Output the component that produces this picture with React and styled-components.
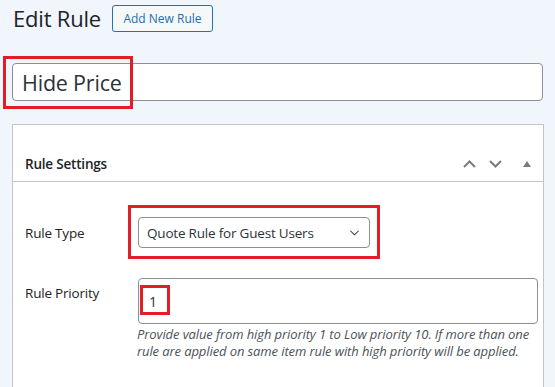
import React from 'react';
import styled, { createGlobalStyle } from 'styled-components';

const GlobalStyle = createGlobalStyle`
  html, body {
    margin: 0;
    padding: 0;
    background: #f0f6fc;
    font-family: "Open Sans", "Noto Sans", sans-serif;
    color: #1d2327;
    overflow: hidden;
  }
  * {
    box-sizing: border-box;
  }
`;

const Page = styled.div`
  padding: 5px 12px 0 12px;
  height: 387px;
  overflow: hidden;
`;

const HeaderBar = styled.div`
  display: flex;
  align-items: center;
  height: 27px;
`;

const Heading = styled.h1`
  margin: 0 0 0 1px;
  font-size: 22px;
  font-weight: 400;
  line-height: 27px;
  letter-spacing: -0.2px;
  color: #1d2327;
`;

const ActionButton = styled.button`
  display: flex;
  align-items: center;
  justify-content: center;
  width: 101px;
  height: 27px;
  margin-left: 11px;
  padding: 0;
  border: 1px solid #2271b1;
  border-radius: 3px;
  background: #f6f7f7;
  color: #2271b1;
  font-family: inherit;
  font-size: 12px;
  font-weight: 500;
`;

const Marked = styled.div`
  position: relative;
`;

const Highlight = styled.span`
  position: absolute;
  left: ${(p) => p.left}px;
  top: ${(p) => p.top}px;
  width: ${(p) => p.width}px;
  height: ${(p) => p.height}px;
  border: 3px solid #e31d25;
  pointer-events: none;
`;

const TitleInput = styled.div`
  display: flex;
  align-items: center;
  height: 38px;
  width: 531px;
  margin-top: 31px;
  padding: 0 9px;
  background: #fff;
  border: 1px solid #8c8f94;
  border-radius: 4px;
  font-size: 21.5px;
  letter-spacing: -0.2px;
  color: #2c3338;
`;

const Postbox = styled.section`
  margin-top: 23px;
  width: 532px;
  height: 270px;
  background: #fff;
  border: 1px solid #c3c4c7;
`;

const PostboxHeader = styled.div`
  display: flex;
  align-items: center;
  height: 57px;
  padding: 21px 0 0 12px;
  border-bottom: 1px solid #c3c4c7;
`;

const PostboxTitle = styled.h2`
  flex: 1;
  margin: 0;
  font-size: 13.5px;
  font-weight: 600;
  letter-spacing: -0.2px;
  color: #1d2327;
`;

const HandleButtons = styled.div`
  display: flex;
  align-items: center;
  padding-right: 12px;
`;

const Handle = styled.span`
  display: flex;
  align-items: center;
  justify-content: center;
  width: ${(p) => p.w}px;
  margin-left: ${(p) => p.gap}px;
  color: #787c82;
`;

const PostboxBody = styled.div`
  display: flex;
  flex-direction: column;
  gap: 30px;
  padding: 35px 5px 0 12px;
`;

const FieldRow = styled.div`
  display: grid;
  grid-template-columns: 113px 1fr;
  align-items: ${(p) => (p.top ? 'start' : 'center')};
`;

const FieldLabel = styled.label`
  padding-top: ${(p) => (p.top ? 5 : 0)}px;
  font-size: 13.5px;
  font-weight: 500;
  line-height: 20px;
  letter-spacing: -0.2px;
  color: #1d2327;
`;

const SelectBox = styled.div`
  display: flex;
  align-items: center;
  justify-content: space-between;
  width: 232px;
  height: 31px;
  padding: 0 9px 0 8px;
  background: #fff;
  border: 1px solid #8c8f94;
  border-radius: 4px;
  font-size: 13.5px;
  letter-spacing: -0.2px;
  color: #2c3338;
`;

const NumberInput = styled.div`
  display: flex;
  align-items: center;
  width: 400px;
  height: 46px;
  padding: 0 10px;
  background: #fff;
  border: 1px solid #8c8f94;
  border-radius: 4px;
  font-size: 14px;
  color: #2c3338;
`;

const HelpText = styled.p`
  margin: 2px 0 0 -1px;
  font-size: 13px;
  font-style: italic;
  line-height: 17px;
  letter-spacing: -0.1px;
  color: #4b5259;
  white-space: nowrap;
`;

const Chevron = ({ up, width = 13, height = 8, stroke = 2 }) => (
  <svg width={width} height={height} viewBox="0 0 13 8" fill="none">
    <path
      d={up ? 'M1 7 L6.5 1.5 L12 7' : 'M1 1 L6.5 6.5 L12 1'}
      stroke="currentColor"
      strokeWidth={stroke}
    />
  </svg>
);

const Triangle = () => (
  <svg width="8" height="6" viewBox="0 0 8 6">
    <path d="M4 0 L8 6 L0 6 Z" fill="currentColor" />
  </svg>
);

export default function App() {
  return (
    <>
      <GlobalStyle />
      <Page>
        <HeaderBar>
          <Heading>Edit Rule</Heading>
          <ActionButton>Add New Rule</ActionButton>
        </HeaderBar>

        <Marked>
          <TitleInput>Hide Price</TitleInput>
          <Highlight left={-9} top={-7} width={130} height={53} />
        </Marked>

        <Postbox>
          <PostboxHeader>
            <PostboxTitle>Rule Settings</PostboxTitle>
            <HandleButtons>
              <Handle w={13} gap={0}>
                <Chevron up />
              </Handle>
              <Handle w={14} gap={12}>
                <Chevron />
              </Handle>
              <Handle w={8} gap={21}>
                <Triangle />
              </Handle>
            </HandleButtons>
          </PostboxHeader>

          <PostboxBody>
            <FieldRow>
              <FieldLabel>Rule Type</FieldLabel>
              <Marked>
                <SelectBox>
                  <span>Quote Rule for Guest Users</span>
                  <Chevron width={11} height={6} stroke={1.4} />
                </SelectBox>
                <Highlight left={-10} top={-12} width={252} height={54} />
              </Marked>
            </FieldRow>

            <FieldRow top>
              <FieldLabel top>Rule Priority</FieldLabel>
              <div>
                <Marked>
                  <NumberInput>1</NumberInput>
                  <Highlight left={2} top={7} width={30} height={30} />
                </Marked>
                <HelpText>
                  Provide value from high priority 1 to Low priority 10. If more than one
                  <br />
                  rule are applied on same item rule with high priority will be applied.
                </HelpText>
              </div>
            </FieldRow>
          </PostboxBody>
        </Postbox>
      </Page>
    </>
  );
}
